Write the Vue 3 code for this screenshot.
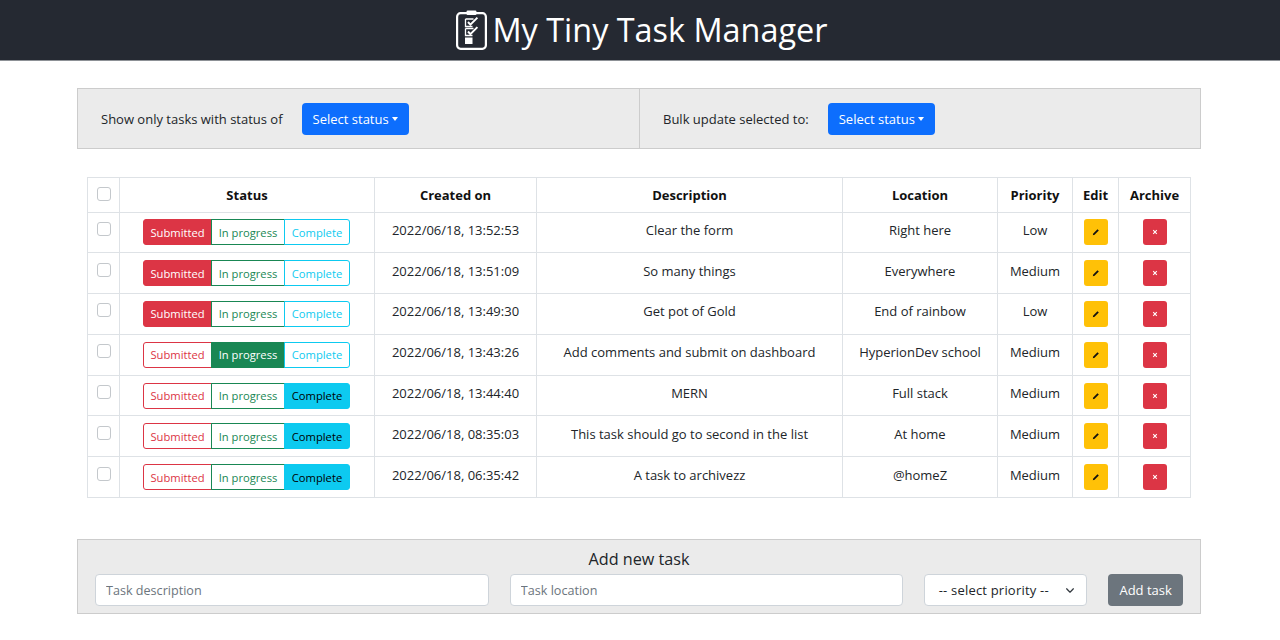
<template>
  <div class="page">
    <header class="top-bar">
      <svg class="logo" viewBox="0 0 31 40" width="31" height="40" fill="none" stroke="#fff">
        <rect x="1.1" y="3.2" width="28.8" height="35.6" rx="3.5" stroke-width="2.2" />
        <rect x="10.5" y="0.5" width="10" height="4.5" rx="1.2" fill="#fff" stroke="none" />
        <path d="M9.5 9h8M9.5 9v7.5h7" stroke-width="1.3" />
        <path d="M12 12l2.4 2.6 7-7" stroke-width="2" />
        <path d="M9.5 18.5h8M9.5 18.5v7h7" stroke-width="1.3" />
        <path d="M12 21.5l2.4 2.6 7-7" stroke-width="2" />
        <rect x="9" y="27.5" width="7.5" height="6.5" fill="#fff" stroke="none" />
      </svg>
      <h1>My Tiny Task Manager</h1>
    </header>

    <main class="content">
      <section class="filter-bar">
        <div class="filter-cell">
          <span>Show only tasks with status of</span>
          <button class="btn-select">Select status<i class="caret"></i></button>
        </div>
        <div class="filter-cell right">
          <span>Bulk update selected to:</span>
          <button class="btn-select">Select status<i class="caret"></i></button>
        </div>
      </section>

      <table class="tasks">
        <colgroup>
          <col class="c-check" />
          <col class="c-status" />
          <col class="c-created" />
          <col class="c-desc" />
          <col class="c-loc" />
          <col class="c-prio" />
          <col class="c-edit" />
          <col class="c-arch" />
        </colgroup>
        <thead>
          <tr>
            <th class="check-cell"><input type="checkbox" /></th>
            <th>Status</th>
            <th>Created on</th>
            <th>Description</th>
            <th>Location</th>
            <th>Priority</th>
            <th>Edit</th>
            <th>Archive</th>
          </tr>
        </thead>
        <tbody>
          <tr v-for="task in tasks" :key="task.created">
            <td class="check-cell"><input type="checkbox" /></td>
            <td>
              <div class="status-group">
                <button
                  v-for="s in statuses"
                  :key="s.name"
                  :class="[s.cls, { active: task.status === s.name }]"
                  @click="task.status = s.name"
                >
                  {{ s.name }}
                </button>
              </div>
            </td>
            <td class="text-cell">{{ task.created }}</td>
            <td class="text-cell">{{ task.description }}</td>
            <td class="text-cell">{{ task.location }}</td>
            <td class="text-cell">{{ task.priority }}</td>
            <td>
              <button class="btn-icon edit">
                <svg viewBox="0 0 10 10" width="10" height="10">
                  <path d="M1.8 8.2l.5-1.8 4.2-4.2 1.3 1.3-4.2 4.2z" fill="#111" />
                </svg>
              </button>
            </td>
            <td>
              <button class="btn-icon archive">
                <svg viewBox="0 0 10 10" width="10" height="10">
                  <path d="M3.2 3.2l3.6 3.6M6.8 3.2l-3.6 3.6" stroke="#fff" stroke-width="1.1" fill="none" />
                </svg>
              </button>
            </td>
          </tr>
        </tbody>
      </table>

      <section class="add-panel">
        <h2>Add new task</h2>
        <div class="add-row">
          <input class="field" type="text" placeholder="Task description" />
          <input class="field" type="text" placeholder="Task location" />
          <div class="priority">
            <span>-- select priority --</span>
            <svg viewBox="0 0 16 16" width="12" height="9" fill="none" stroke="#343a40" stroke-width="2.2" stroke-linecap="round" stroke-linejoin="round">
              <path d="M2 5l6 6 6-6" />
            </svg>
          </div>
          <button class="btn-add">Add task</button>
        </div>
      </section>
    </main>
  </div>
</template>

<script setup>
import { reactive } from 'vue';

const statuses = [
  { name: 'Submitted', cls: 'st-red' },
  { name: 'In progress', cls: 'st-green' },
  { name: 'Complete', cls: 'st-cyan' }
];

const tasks = reactive([
  { status: 'Submitted', created: '2022/06/18, 13:52:53', description: 'Clear the form', location: 'Right here', priority: 'Low' },
  { status: 'Submitted', created: '2022/06/18, 13:51:09', description: 'So many things', location: 'Everywhere', priority: 'Medium' },
  { status: 'Submitted', created: '2022/06/18, 13:49:30', description: 'Get pot of Gold', location: 'End of rainbow', priority: 'Low' },
  { status: 'In progress', created: '2022/06/18, 13:43:26', description: 'Add comments and submit on dashboard', location: 'HyperionDev school', priority: 'Medium' },
  { status: 'Complete', created: '2022/06/18, 13:44:40', description: 'MERN', location: 'Full stack', priority: 'Medium' },
  { status: 'Complete', created: '2022/06/18, 08:35:03', description: 'This task should go to second in the list', location: 'At home', priority: 'Medium' },
  { status: 'Complete', created: '2022/06/18, 06:35:42', description: 'A task to archivezz', location: '@homeZ', priority: 'Medium' }
]);
</script>

<style>
html, body {
  margin: 0;
  background: #fff;
}
</style>

<style scoped>
.page {
  font-family: "Open Sans", "Noto Sans", sans-serif;
  font-size: 13px;
  color: #212529;
  height: 640px;
  overflow: hidden;
}

.top-bar {
  height: 61px;
  background: #252932;
  border-bottom: 1px solid #8d9196;
  box-sizing: border-box;
  display: flex;
  align-items: center;
  justify-content: center;
  gap: 5px;
  padding-left: 4px;
  color: #fff;
}

.top-bar h1 {
  margin: 0 0 2px;
  font-size: 32.4px;
  font-weight: 400;
}

.content {
  padding: 27px 79px 0 77px;
}

.filter-bar {
  display: flex;
  height: 61px;
  box-sizing: border-box;
  background: #ebebeb;
  border: 1px solid #ccc;
}

.filter-cell {
  flex: 0 0 561px;
  box-sizing: border-box;
  display: flex;
  align-items: center;
  gap: 19px;
  padding-left: 23px;
}

.filter-cell.right {
  flex: 1;
  border-left: 1px solid #ccc;
}

.btn-select {
  height: 32px;
  width: 107px;
  background: #0d6efd;
  color: #fff;
  border: none;
  border-radius: 4px;
  font: inherit;
  padding: 0 0 0 11px;
  text-align: left;
}

.caret {
  display: inline-block;
  margin-left: 3px;
  vertical-align: 3px;
  border-top: 4px solid #fff;
  border-left: 3.5px solid transparent;
  border-right: 3.5px solid transparent;
}

.tasks {
  table-layout: fixed;
  border-collapse: collapse;
  width: 1103px;
  margin: 28px 0 0 10px;
}

.c-check { width: 32px; }
.c-status { width: 255px; }
.c-created { width: 162px; }
.c-desc { width: 306px; }
.c-loc { width: 155px; }
.c-prio { width: 75px; }
.c-edit { width: 46px; }
.c-arch { width: 72px; }

.tasks th,
.tasks td {
  box-sizing: border-box;
  border: 1px solid #dee2e6;
  text-align: center;
  padding: 0;
}

.tasks th {
  height: 34.5px;
  font-weight: 700;
  color: #111;
}

.tasks td {
  height: 40.8px;
}

.tasks td.text-cell {
  padding-bottom: 5px;
}

.check-cell input {
  appearance: none;
  display: block;
  width: 14px;
  height: 14px;
  margin: -7px auto 0;
  background: #fff;
  border: 1px solid #c4c8cc;
  border-radius: 3px;
}

th.check-cell input {
  margin-top: -2px;
}

.status-group {
  display: flex;
  width: 207px;
  height: 26px;
  margin: 0 0 0 23px;
}

.status-group button {
  font: inherit;
  font-size: 11.2px;
  background: #fff;
  border-width: 1px;
  border-style: solid;
  padding: 0;
  white-space: nowrap;
}

.status-group button:first-child {
  width: 69px;
  border-radius: 3px 0 0 3px;
}

.status-group button:nth-child(2) {
  width: 74px;
  margin-left: -1px;
}

.status-group button:last-child {
  width: 66px;
  margin-left: -1px;
  border-radius: 0 3px 3px 0;
}

.st-red { color: #dc3545; border-color: #dc3545; }
.st-green { color: #198754; border-color: #198754; }
.st-cyan { color: #0dcaf0; border-color: #0dcaf0; }

.status-group .st-red.active { background: #dc3545; color: #fff; }
.status-group .st-green.active { background: #198754; color: #fff; }
.status-group .st-cyan.active { background: #0dcaf0; color: #000; }

.btn-icon {
  display: flex;
  align-items: center;
  justify-content: center;
  width: 24px;
  height: 26px;
  margin: 0 auto;
  padding: 0;
  border: none;
  border-radius: 3px;
}

.btn-icon.edit { background: #ffc107; }
.btn-icon.archive { background: #dc3545; }

.add-panel {
  margin-top: 41px;
  height: 75px;
  box-sizing: border-box;
  background: #ebebeb;
  border: 1px solid #ccc;
  padding: 9px 17px 0;
}

.add-panel h2 {
  margin: 0;
  font-size: 16.2px;
  font-weight: 400;
  line-height: 21px;
  text-align: center;
}

.add-row {
  display: flex;
  margin-top: 4px;
  height: 32px;
}

.field,
.priority {
  box-sizing: border-box;
  background: #fff;
  border: 1px solid #ced4da;
  border-radius: 4px;
  font: inherit;
  color: #212529;
}

.field {
  width: 394px;
  margin-right: 21px;
  padding: 1px 10px 0;
  outline: none;
  font-size: 12.6px;
}

.field:first-child {
  width: 395px;
}

.field::placeholder {
  color: #6c757d;
}

.priority {
  width: 164px;
  display: flex;
  align-items: center;
  justify-content: space-between;
  padding: 0 10px 0 14px;
  letter-spacing: 0.2px;
}

.btn-add {
  width: 75px;
  margin-left: 21px;
  background: #6c757d;
  color: #fff;
  border: none;
  border-radius: 4px;
  font: inherit;
  padding: 0;
}
</style>
